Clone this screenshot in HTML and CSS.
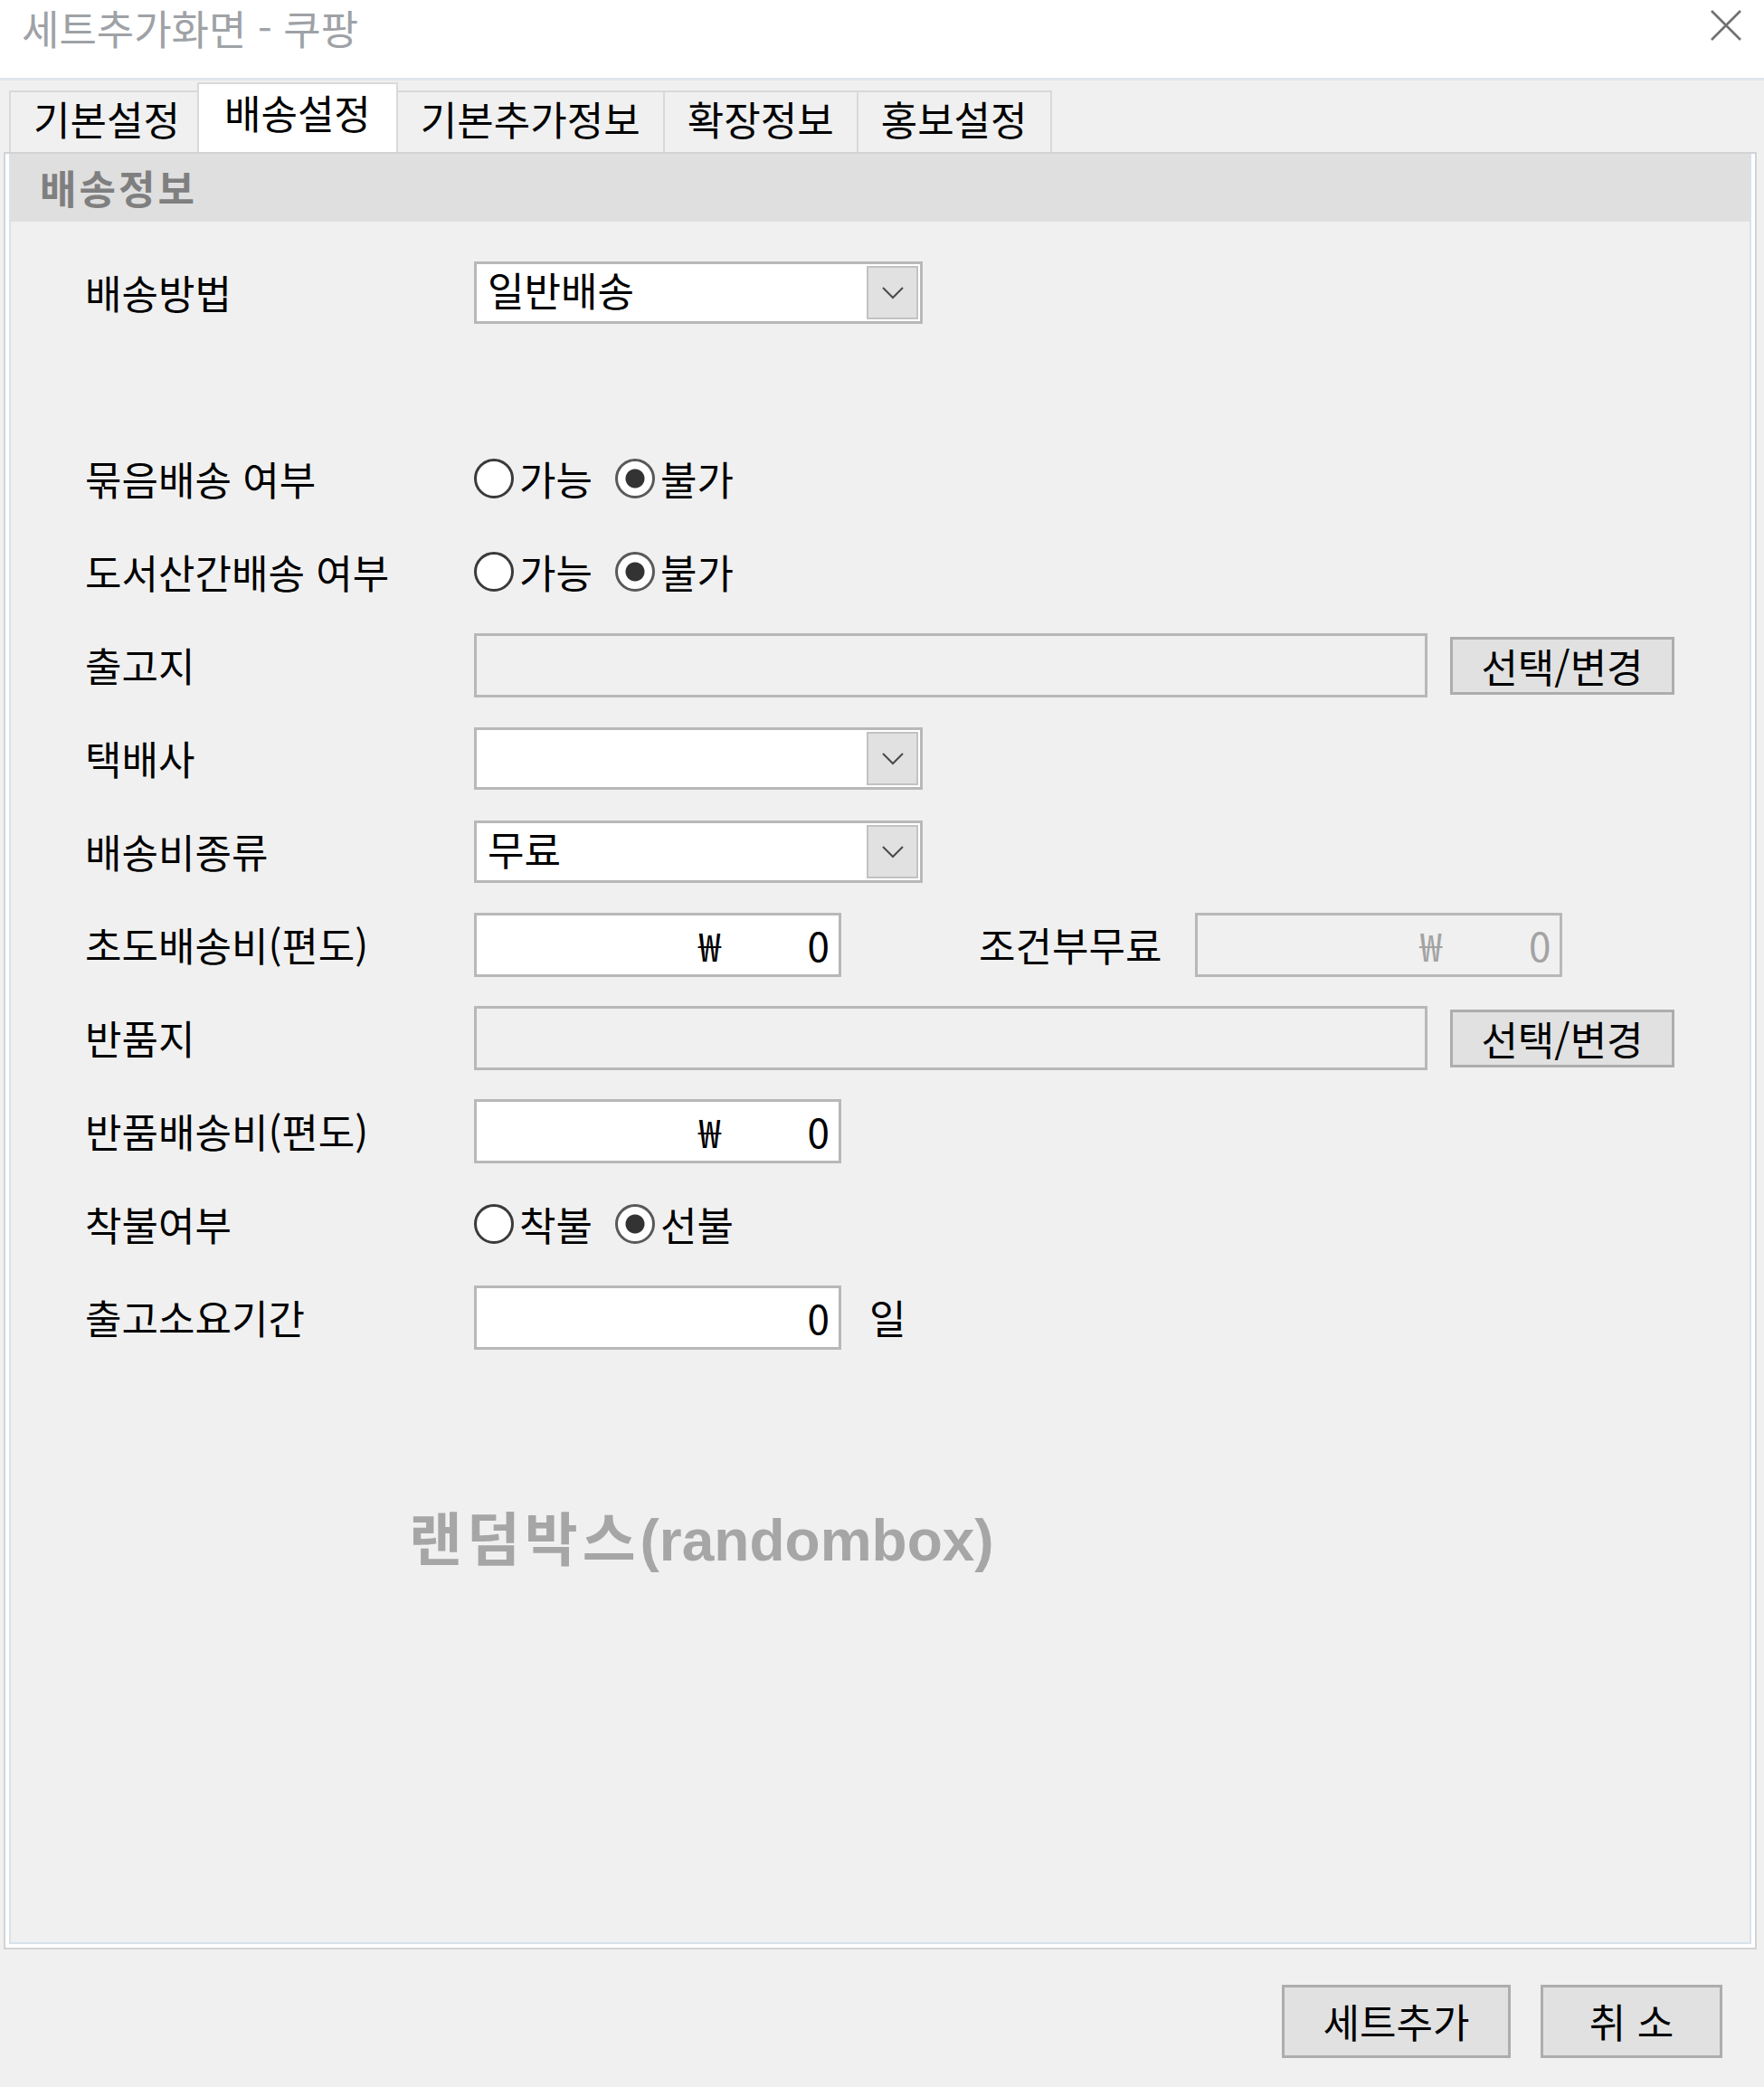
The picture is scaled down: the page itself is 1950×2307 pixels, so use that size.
FILE: index.html
```html
<!DOCTYPE html>
<html lang="ko">
<head>
    <meta charset="UTF-8">
    <meta name="viewport" content="width=device-width, initial-scale=1.0">
    <title>세트추가화면 - 쿠팡</title>
    <link rel="stylesheet" href="styles.css">
</head>
<body>
    <div class="window">
        <header class="titlebar">
            <span class="title">세트추가화면 - 쿠팡</span>
            <button class="close" type="button" aria-label="닫기">
                <svg width="36" height="36" viewBox="0 0 36 36">
                    <path d="M2 2 L34 34 M34 2 L2 34" stroke="#707070" stroke-width="2.6" fill="none"/>
                </svg>
            </button>
        </header>

        <nav class="tabs">
            <div class="tab">기본설정</div>
            <div class="tab active">배송설정</div>
            <div class="tab">기본추가정보</div>
            <div class="tab">확장정보</div>
            <div class="tab">홍보설정</div>
        </nav>

        <section class="panel">
            <div class="panel-inner">
                <div class="panel-head">배송정보</div>

                <form class="form">
                    <div class="row">
                        <label class="label">배송방법</label>
                        <div class="select">
                            <span>일반배송</span>
                            <span class="select-btn">
                                <svg width="24" height="14" viewBox="0 0 24 14"><polyline points="1,1 12,12 23,1" fill="none" stroke="#4a4a4a" stroke-width="2"/></svg>
                            </span>
                        </div>
                    </div>

                    <div class="row"></div>

                    <div class="row">
                        <label class="label">묶음배송 여부</label>
                        <div class="radios">
                            <label class="radio"><input type="radio" name="bundle">가능</label>
                            <label class="radio"><input type="radio" name="bundle" checked>불가</label>
                        </div>
                    </div>

                    <div class="row">
                        <label class="label">도서산간배송 여부</label>
                        <div class="radios">
                            <label class="radio"><input type="radio" name="island">가능</label>
                            <label class="radio"><input type="radio" name="island" checked>불가</label>
                        </div>
                    </div>

                    <div class="row">
                        <label class="label">출고지</label>
                        <div class="field wide"></div>
                        <button class="btn pick" type="button">선택/변경</button>
                    </div>

                    <div class="row">
                        <label class="label">택배사</label>
                        <div class="select">
                            <span></span>
                            <span class="select-btn">
                                <svg width="24" height="14" viewBox="0 0 24 14"><polyline points="1,1 12,12 23,1" fill="none" stroke="#4a4a4a" stroke-width="2"/></svg>
                            </span>
                        </div>
                    </div>

                    <div class="row">
                        <label class="label">배송비종류</label>
                        <div class="select">
                            <span>무료</span>
                            <span class="select-btn">
                                <svg width="24" height="14" viewBox="0 0 24 14"><polyline points="1,1 12,12 23,1" fill="none" stroke="#4a4a4a" stroke-width="2"/></svg>
                            </span>
                        </div>
                    </div>

                    <div class="row">
                        <label class="label">초도배송비(편도)</label>
                        <div class="field money"><span class="won">₩</span><span>0</span></div>
                        <label class="label-inline">조건부무료</label>
                        <div class="field money disabled"><span class="won">₩</span><span>0</span></div>
                    </div>

                    <div class="row">
                        <label class="label">반품지</label>
                        <div class="field wide"></div>
                        <button class="btn pick" type="button">선택/변경</button>
                    </div>

                    <div class="row">
                        <label class="label">반품배송비(편도)</label>
                        <div class="field money"><span class="won">₩</span><span>0</span></div>
                    </div>

                    <div class="row">
                        <label class="label">착불여부</label>
                        <div class="radios">
                            <label class="radio"><input type="radio" name="pay">착불</label>
                            <label class="radio"><input type="radio" name="pay" checked>선불</label>
                        </div>
                    </div>

                    <div class="row">
                        <label class="label">출고소요기간</label>
                        <div class="field money"><span>0</span></div>
                        <span class="unit">일</span>
                    </div>
                </form>

                <div class="watermark"><span class="ko">랜덤박스</span>(randombox)</div>
            </div>
        </section>

        <footer class="actions">
            <button class="btn add" type="button">세트추가</button>
            <button class="btn cancel" type="button">취 소</button>
        </footer>
    </div>
</body>
</html>
```

FILE: styles.css
```css
* {
    box-sizing: border-box;
    margin: 0;
    padding: 0;
}

body {
    font-family: "Noto Sans CJK KR", "Noto Sans", sans-serif;
    font-size: 44px;
    line-height: 1.2;
    color: #000;
    background-color: #f0f0f0;
    width: 1950px;
    height: 2307px;
    overflow: hidden;
}

.titlebar {
    height: 89px;
    background-color: #fff;
    border-bottom: 3px solid #dfe6ec;
    display: flex;
    justify-content: space-between;
    align-items: flex-start;
    padding: 4px 24px 0 24px;
}

.title {
    font-size: 45px;
    color: #9ea2a6;
}

.close {
    width: 36px;
    height: 36px;
    margin-top: 6px;
    border: none;
    background: none;
}

.tabs {
    display: flex;
    align-items: flex-end;
    height: 79px;
    padding-left: 10px;
}

.tab {
    height: 68px;
    padding: 0 25px 8px;
    display: flex;
    align-items: center;
    border: 2px solid #d9d9d9;
    border-bottom: none;
    background-color: #f0f0f0;
}

.tab + .tab {
    border-left: none;
}

.tab.active {
    height: 77px;
    margin-left: -8px;
    padding: 0 28px 12px;
    background-color: #fff;
    border-left: 2px solid #d9d9d9;
    position: relative;
    z-index: 1;
}

.panel {
    width: 1938px;
    height: 1987px;
    margin-left: 4px;
    padding: 0 4px 4px;
    background-color: #fff;
    border: 2px solid #d3d3d3;
}

.panel-inner {
    height: 100%;
    background-color: #f0f0f0;
    border: 2px solid #d8e2eb;
    border-top: none;
}

.panel-head {
    height: 75px;
    padding-left: 32px;
    display: flex;
    align-items: center;
    background-color: #dfdfdf;
    color: #7f7f7f;
    font-weight: bold;
    letter-spacing: 3px;
}

.form {
    padding: 27px 0 0 82px;
}

.row {
    height: 103px;
    display: flex;
    align-items: center;
}

.label {
    width: 430px;
    flex: none;
}

.select {
    width: 496px;
    height: 69px;
    padding: 0 2px 0 12px;
    display: flex;
    align-items: center;
    justify-content: space-between;
    background-color: #fff;
    border: 3px solid #b8b8b8;
}

.select span:first-child {
    margin-top: -6px;
}

.select-btn {
    width: 57px;
    height: 59px;
    display: flex;
    align-items: center;
    justify-content: center;
    background-color: #e1e1e1;
    border: 2px solid #c2c2c2;
}

.radios {
    display: flex;
    align-items: center;
}

.radio {
    display: flex;
    align-items: center;
    gap: 6px;
    margin-right: 25px;
}

.radio input {
    appearance: none;
    width: 44px;
    height: 44px;
    border: 3px solid #3a3a3a;
    border-radius: 50%;
    background-color: #fff;
}

.radio input:checked {
    border-color: #595959;
    background: radial-gradient(circle, #333 0 10px, #fff 11px);
}

.field {
    height: 71px;
    background-color: #fff;
    border: 3px solid #b8b8b8;
}

.field.wide {
    width: 1054px;
    background-color: #f0f0f0;
}

.money {
    width: 406px;
    padding-right: 10px;
    display: flex;
    align-items: center;
    justify-content: flex-end;
}

.money .won {
    margin-right: 96px;
}

.money.disabled {
    margin-left: 37px;
    background-color: #f0f0f0;
    color: #a3a3a3;
}

.label-inline {
    margin-left: 152px;
}

.unit {
    margin-left: 31px;
}

.btn {
    font: inherit;
    color: #000;
    background-color: #e1e1e1;
    border: 3px solid #adadad;
}

.btn.pick {
    width: 248px;
    height: 64px;
    margin-left: 25px;
    line-height: 1;
}

.watermark {
    margin: 157px 0 0 440px;
    font-family: "Liberation Sans", "Noto Sans CJK KR", sans-serif;
    font-size: 64px;
    font-weight: bold;
    color: #a6a6a6;
}

.watermark .ko {
    letter-spacing: 5px;
}

.actions {
    display: flex;
    justify-content: flex-end;
    gap: 33px;
    padding: 39px 46px 0 0;
}

.actions .btn {
    height: 81px;
}

.btn.add {
    width: 253px;
}

.btn.cancel {
    width: 201px;
}
```
